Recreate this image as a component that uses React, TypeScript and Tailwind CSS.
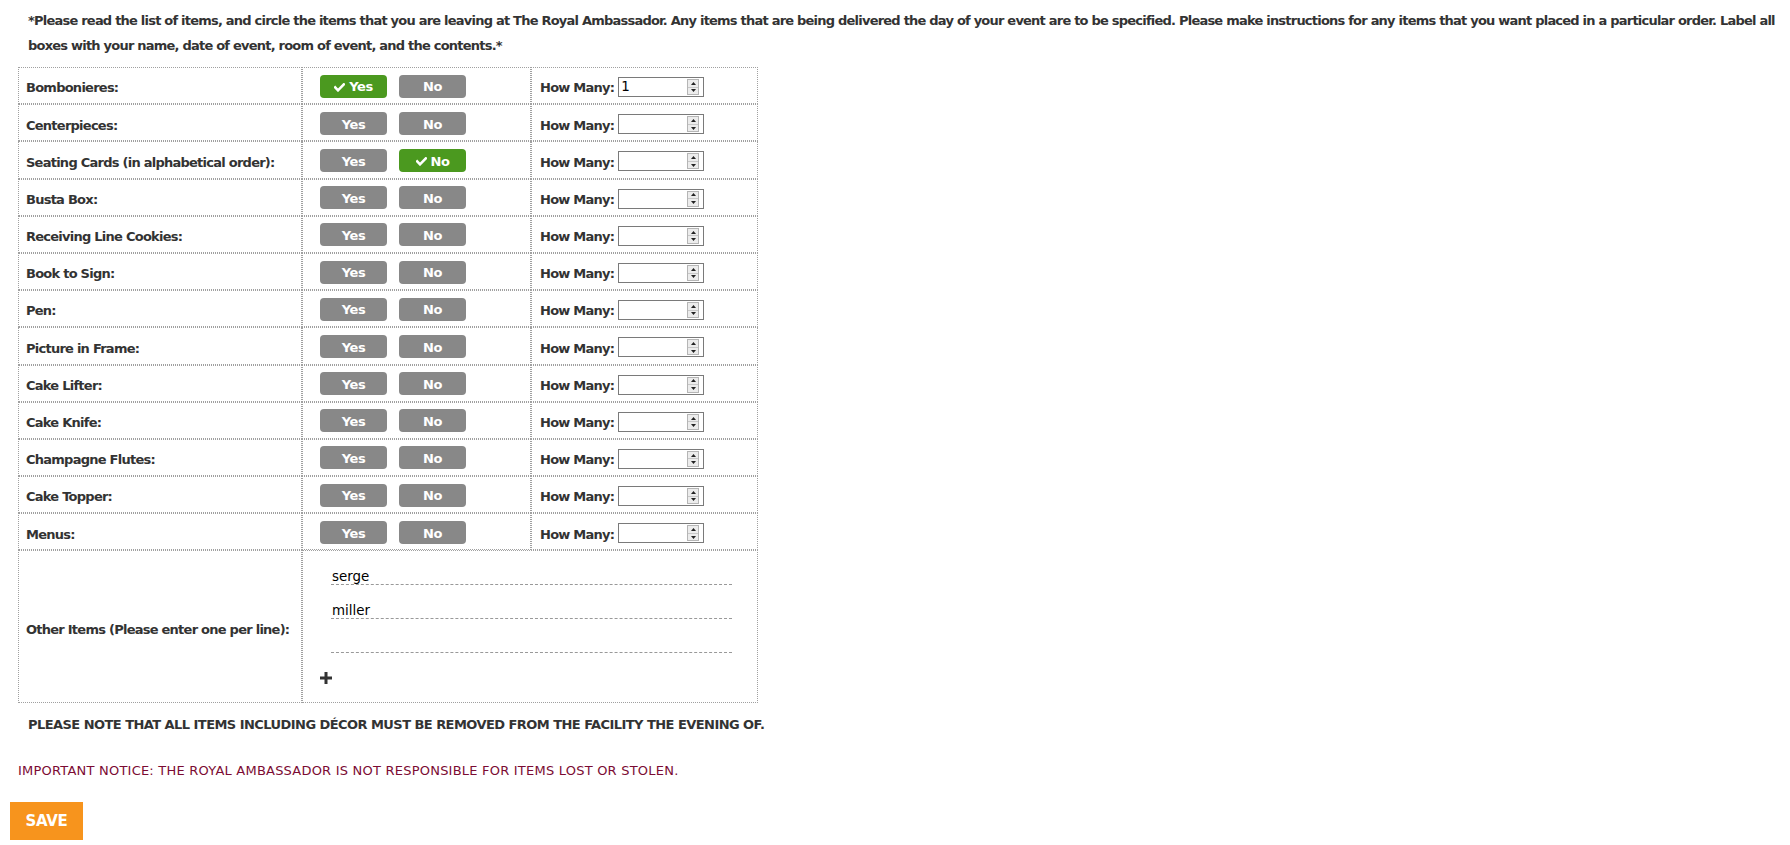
import React from "react";

type Item = { name: string; sel: "yes" | "no" | null; qty: string };

const items: Item[] = [
  { name: "Bombonieres:", sel: "yes", qty: "1" },
  { name: "Centerpieces:", sel: null, qty: "" },
  { name: "Seating Cards (in alphabetical order):", sel: "no", qty: "" },
  { name: "Busta Box:", sel: null, qty: "" },
  { name: "Receiving Line Cookies:", sel: null, qty: "" },
  { name: "Book to Sign:", sel: null, qty: "" },
  { name: "Pen:", sel: null, qty: "" },
  { name: "Picture in Frame:", sel: null, qty: "" },
  { name: "Cake Lifter:", sel: null, qty: "" },
  { name: "Cake Knife:", sel: null, qty: "" },
  { name: "Champagne Flutes:", sel: null, qty: "" },
  { name: "Cake Topper:", sel: null, qty: "" },
  { name: "Menus:", sel: null, qty: "" },
];

function Check() {
  return (
    <svg width="11" height="9" viewBox="0 0 11 9" className="mr-[4px]">
      <path d="M1.2 4.4 L4 7.3 L9.8 1.4" stroke="white" strokeWidth="2.6" fill="none" strokeLinecap="square" />
    </svg>
  );
}

function Toggle({ label, active }: { label: string; active: boolean }) {
  return (
    <button
      type="button"
      className={
        "flex items-center justify-center w-[67px] h-[23px] pt-[2px] rounded-[4px] text-white text-[13px] font-bold tracking-[-0.5px] " +
        (active ? "bg-[#4b991f]" : "bg-[#888888]")
      }
    >
      {active && <Check />}
      {label}
    </button>
  );
}

function Spinner() {
  return (
    <div className="flex flex-col w-[12px] h-[16px] border border-[#b5b5b5] bg-[#ececec] mr-[4px]">
      <div className="flex-1 flex items-center justify-center border-b border-[#c8c8c8]">
        <svg width="5" height="3" viewBox="0 0 5 3">
          <polygon points="0,3 2.5,0 5,3" fill="#222" />
        </svg>
      </div>
      <div className="flex-1 flex items-center justify-center">
        <svg width="5" height="3" viewBox="0 0 5 3">
          <polygon points="0,0 2.5,3 5,0" fill="#222" />
        </svg>
      </div>
    </div>
  );
}

function Qty({ value }: { value: string }) {
  return (
    <div className="flex items-center w-[86px] h-[20px] border border-[#7a7a7a] bg-white">
      <span className="flex-1 pl-[2px] text-[13.4px] leading-[16px] font-normal tracking-normal text-black">{value}</span>
      <Spinner />
    </div>
  );
}

const cell = "border border-dotted border-[#a0a0a0] align-middle";

export default function App() {
  return (
    <div className="w-[1790px] h-[845px] bg-white text-[#333333] font-['DejaVu_Sans',Verdana,sans-serif]">
      <p className="pl-[28px] pr-[4px] pt-[8px] text-[13px] font-bold leading-[25px] tracking-[-0.78px]">
        *Please read the list of items, and circle the items that you are leaving at The Royal Ambassador. Any items that are being delivered the day of your event are to be specified. Please make instructions for any items that you want placed in a particular order. Label all boxes with your name, date of event, room of event, and the contents.*
      </p>
      <table className="ml-[18px] mt-[9px] w-[740px] border-separate border-spacing-0 text-[13px] font-bold tracking-[-0.75px]">
        <tbody>
          {items.map((it) => (
            <tr key={it.name} className="h-[37.2px]">
              <td className={cell + " w-[284px] pl-[7px] pt-[5px] whitespace-nowrap"}>{it.name}</td>
              <td className={cell + " w-[229px] pl-[17px]"}>
                <div className="flex items-center gap-[12px] pt-[1px]">
                  <Toggle label="Yes" active={it.sel === "yes"} />
                  <Toggle label="No" active={it.sel === "no"} />
                </div>
              </td>
              <td className={cell + " pl-[8px]"}>
                <div className="flex items-center gap-[4px] pt-[3px]">
                  <span className="pt-[2px]">How Many:</span>
                  <Qty value={it.qty} />
                </div>
              </td>
            </tr>
          ))}
          <tr>
            <td className={cell + " pl-[7px] pt-[5px] h-[150px] whitespace-nowrap"}>Other Items (Please enter one per line):</td>
            <td colSpan={2} className={cell + " pl-[17px] pt-[9px] pb-[18px] font-normal tracking-normal"}>
              <div className="flex flex-col gap-[9px] ml-[11px]">
                {["serge", "miller", ""].map((v, i) => (
                  <input
                    key={i}
                    readOnly
                    defaultValue={v}
                    className="w-[401px] h-[25px] pt-[8px] border-b border-dashed border-[#999] text-[13.4px] text-black outline-none bg-transparent pl-[1px] font-['DejaVu_Sans',Verdana,sans-serif]"
                  />
                ))}
              </div>
              <div className="mt-[19px]">
                <svg width="12" height="12" viewBox="0 0 12 12">
                  <rect x="4.5" y="0" width="3" height="12" fill="#333" />
                  <rect x="0" y="4.5" width="12" height="3" fill="#333" />
                </svg>
              </div>
            </td>
          </tr>
        </tbody>
      </table>
      <p className="pl-[28px] mt-[13px] text-[13px] font-bold leading-[18px] tracking-[-0.55px]">
        PLEASE NOTE THAT ALL ITEMS INCLUDING DÉCOR MUST BE REMOVED FROM THE FACILITY THE EVENING OF.
      </p>
      <p className="pl-[18px] mt-[28px] text-[13px] leading-[18px] tracking-[0.22px] text-[#7b0b33]">
        IMPORTANT NOTICE: THE ROYAL AMBASSADOR IS NOT RESPONSIBLE FOR ITEMS LOST OR STOLEN.
      </p>
      <button type="button" className="block ml-[10px] mt-[22px] w-[73px] h-[38px] bg-[#f7941d] text-white text-[15px] font-bold tracking-[-0.3px]">
        SAVE
      </button>
    </div>
  );
}
